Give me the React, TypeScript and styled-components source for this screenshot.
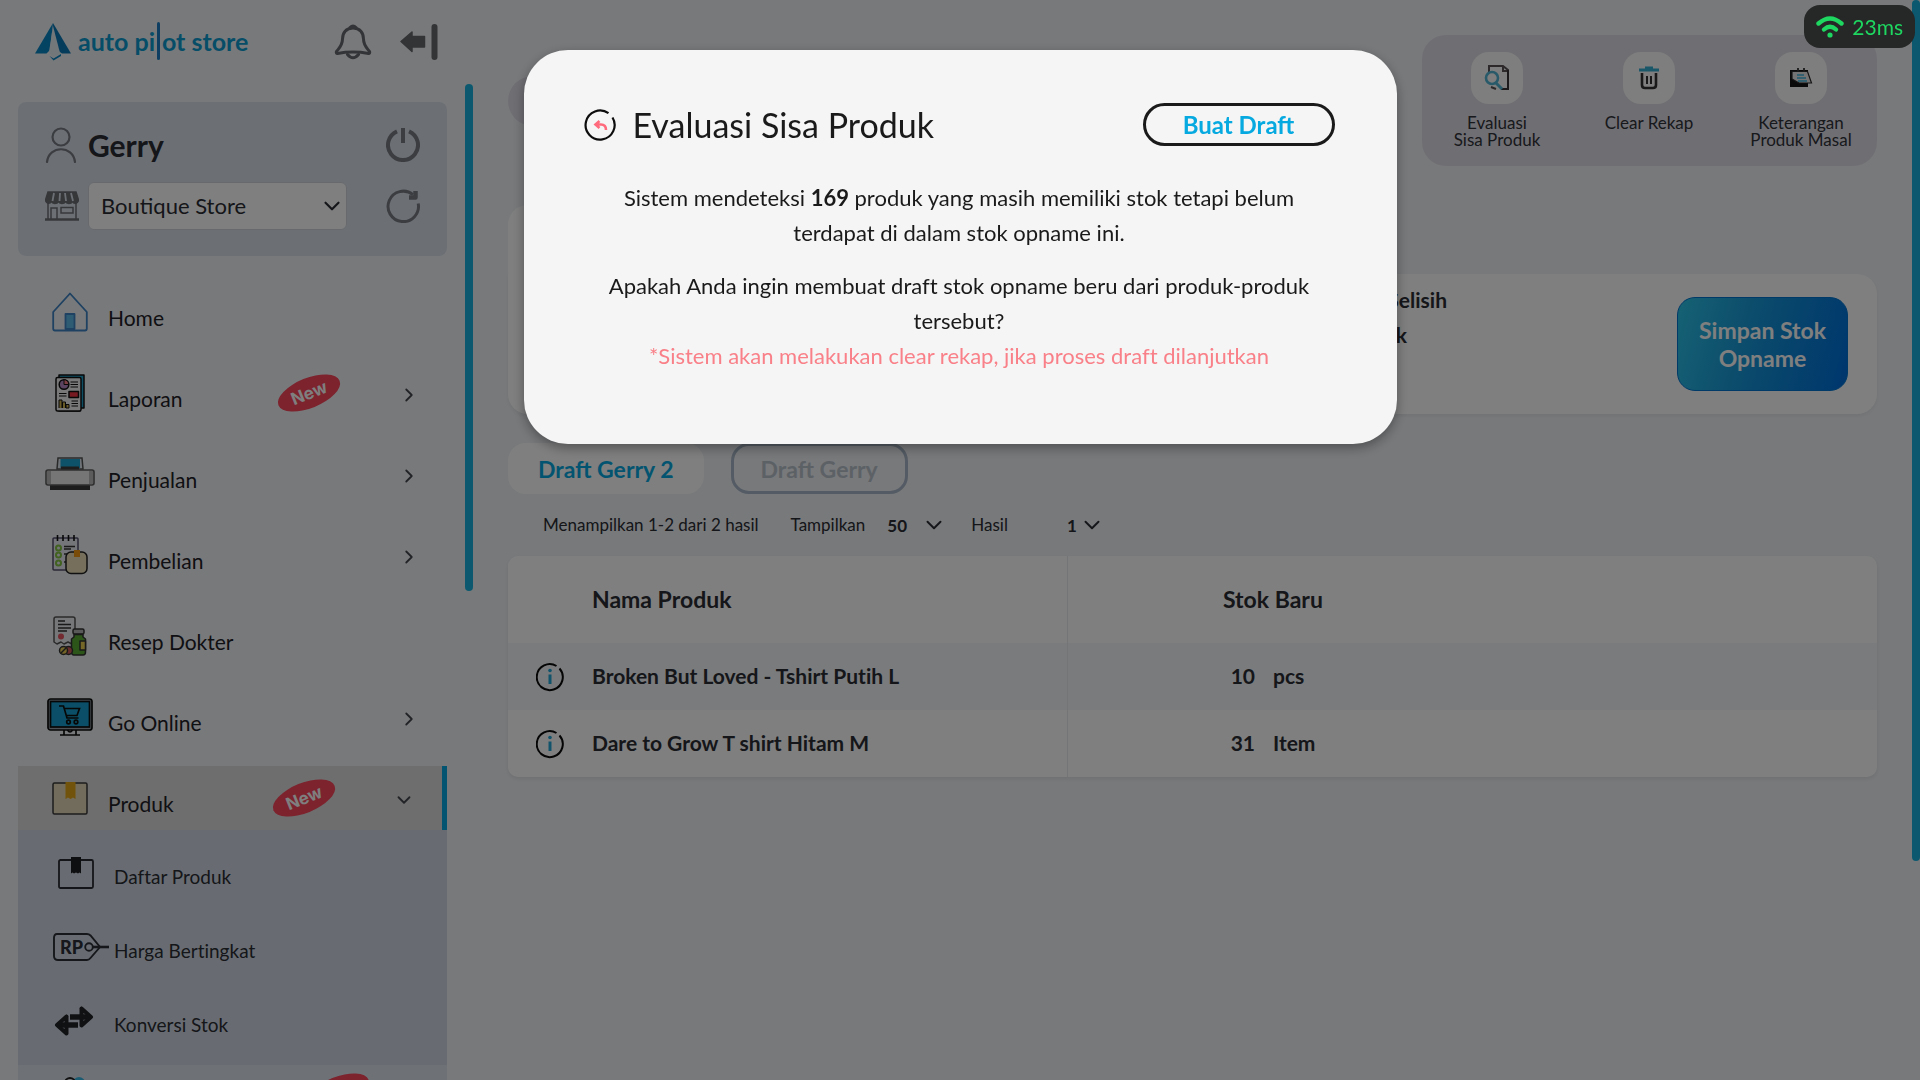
import React from "react";
import styled, { createGlobalStyle } from "styled-components";
import { ChevronDown, ChevronRight } from "lucide-react";

const font = `Lato, "Open Sans", "Liberation Sans", sans-serif`;
const ink = "#2b2d33";
const brand = "#06a9e0";

const GlobalStyle = createGlobalStyle`
  *, *::before, *::after { box-sizing: border-box; }
  body {
    margin: 0;
    background: #f0f3f6;
    color: ${ink};
    font-family: ${font};
    font-variant-ligatures: none;
    overflow: hidden;
  }
  button, select { font-family: inherit; color: inherit; }
  h1, p, ul { margin: 0; padding: 0; }
  ul { list-style: none; }
  svg { display: block; flex: none; }
`;

/* ---------- page frame ---------- */

const Page = styled.div`
  display: flex;
  height: 100vh;
  overflow: hidden;
`;

const Sidebar = styled.aside`
  flex: none;
  width: 508px;
  display: flex;
  flex-direction: column;
`;

const Main = styled.main`
  flex: 1;
  min-width: 0;
  padding: 35px 35px 0 0;
`;

const ScrollTrack = styled.div`
  flex: none;
  width: 8px;
`;

const ScrollThumb = styled.div<{ $size: string }>`
  height: ${(p) => p.$size};
  border-radius: 4px;
  background: #17b1de;
`;

/* ---------- sidebar ---------- */

const SideHeader = styled.header`
  display: flex;
  align-items: center;
  height: 84px;
  padding: 0 70px 0 35px;
`;

const Logo = styled.a`
  display: flex;
  align-items: center;
  gap: 7px;
  margin-right: auto;
  color: #0d9ad0;
  text-decoration: none;
`;

const LogoText = styled.span`
  display: flex;
  align-items: center;
  padding-bottom: 2px;
  font-size: 25px;
  line-height: 36px;
  font-weight: 700;
`;

const LogoBar = styled.span`
  width: 3px;
  height: 38px;
  margin: 0 2px;
  border-radius: 2px;
  background: #1c7fc4;
`;

const IconButton = styled.button`
  display: flex;
  padding: 0;
  border: 0;
  background: none;
  color: #66696e;
  cursor: pointer;
`;

const HeaderActions = styled.div`
  display: flex;
  align-items: center;
  gap: 28px;
`;

const SideBody = styled.div`
  flex: 1;
  min-height: 0;
  display: flex;
  gap: 18px;
  padding-left: 18px;
`;

const SideContent = styled.div`
  flex: none;
  width: 429px;
  padding-top: 18px;
  overflow: hidden;
`;

const UserCard = styled.section`
  display: grid;
  grid-template-columns: 34px 258px 1fr;
  column-gap: 9px;
  row-gap: 6px;
  align-items: center;
  height: 154px;
  padding: 18px 27px 20px 27px;
  border-radius: 8px;
  background: #d9e0eb;

  & > button { justify-self: end; }
`;

const UserName = styled.strong`
  font-size: 30px;
  line-height: 34px;
`;

const SelectWrap = styled.span<{ $width: string }>`
  display: grid;
  width: ${(p) => p.$width};
  align-items: center;

  & > * { grid-area: 1 / 1; }
  & > svg { justify-self: end; margin-right: 2px; pointer-events: none; }
`;

const StoreSelect = styled.select`
  appearance: none;
  height: 48px;
  padding: 0 36px 0 12px;
  border: 1px solid #cfd3da;
  border-radius: 6px;
  background: #fff;
  font-size: 22px;
`;

const Menu = styled.ul`
  display: flex;
  flex-direction: column;
  gap: 17px;
  padding-top: 24px;
`;

const MenuLink = styled.a<{ $active?: boolean }>`
  display: grid;
  grid-template-columns: 50px 1fr 66px 16px;
  align-items: center;
  height: 64px;
  padding: 0 33px 0 27px;
  color: #1f2126;
  text-decoration: none;
  ${(p) =>
    p.$active &&
    `border-right: 5px solid ${brand}; background: #dcdcdc;`}

  & > :first-child { justify-self: center; }
`;

const MenuLabel = styled.span`
  padding: 12px 0 0 13px;
  font-size: 21px;
  line-height: 28px;
`;

const BadgeSlot = styled.span`
  grid-column: 3;
  width: 122px;
  justify-self: end;
`;

const NewBadge = styled.span`
  display: block;
  width: 66px;
  border-radius: 50%;
  background: #f8465c;
  color: #fff;
  font: 700 17px/30px Inter, sans-serif;
  text-align: center;
  transform: rotate(-22deg);
`;

const ChevronSlot = styled.span`
  grid-column: 4;
  padding-top: 4px;
`;

const SubMenu = styled.ul`
  padding: 10px 0 3px;
  background: #d1d9e5;
`;

const SubLink = styled.a`
  display: flex;
  align-items: center;
  height: 74px;
  padding-left: 35px;
  color: ${ink};
  text-decoration: none;
  font-size: 19px;
  line-height: 28px;
`;

const SubIcon = styled.span`
  width: 61px;
  padding-bottom: 8px;
`;

const NextLink = styled(MenuLink)`
  height: 88px;
  align-items: start;
  padding: 12px 4px 0 27px;
  background: #dde3ec;
`;

/* ---------- top actions ---------- */

const TopBar = styled.div`
  display: flex;
  justify-content: space-between;
  align-items: center;
  height: 131px;
`;

const BackPill = styled.button`
  width: 120px;
  height: 50px;
  border: 0;
  border-radius: 25px;
  background: #dfdde6;
`;

const ActionPanel = styled.div`
  display: flex;
  justify-content: space-between;
  align-self: stretch;
  width: 455px;
  padding: 17px 11px 0 10px;
  border-radius: 24px;
  background: #dfdde6;
`;

const ActionButton = styled.button`
  display: flex;
  flex-direction: column;
  align-items: center;
  gap: 10px;
  width: 130px;
  padding: 0;
  border: 0;
  background: none;
  color: #303238;
  font-size: 17px;
  line-height: 17px;
  white-space: pre-line;
`;

const ActionTile = styled.span`
  display: grid;
  place-items: center;
  width: 52px;
  height: 52px;
  border-radius: 18px;
  background: #fdfdfd;
`;

/* ---------- summary ---------- */

const SummaryTab = styled.div`
  width: 400px;
  height: 69px;
  margin-top: 39px;
  border-radius: 20px 20px 0 0;
  background: #fff;
`;

const Summary = styled.section`
  display: flex;
  justify-content: flex-end;
  align-items: center;
  gap: 230px;
  height: 140px;
  padding-right: 29px;
  border-radius: 0 20px 20px 20px;
  background: #fff;
  box-shadow: 0 2px 4px rgba(0, 0, 0, 0.06);
`;

const SummaryInfo = styled.p`
  align-self: flex-start;
  padding-top: 8px;
  font-size: 21px;
  line-height: 35px;
  font-weight: 700;
`;

const SaveButton = styled.button`
  width: 171px;
  height: 94px;
  padding: 0 16px;
  border: 1px solid #0074d0;
  border-radius: 18px;
  background: linear-gradient(105deg, #2cc4e8 0%, #1899d8 40%, #0071da 95%);
  color: #fff;
  font-size: 23px;
  line-height: 28px;
  font-weight: 700;
`;

/* ---------- drafts and table ---------- */

const Tabs = styled.div`
  display: flex;
  gap: 27px;
  margin-top: 29px;
`;

const Tab = styled.button<{ $selected?: boolean }>`
  height: 51px;
  padding: 0 27px;
  border: 3px solid ${(p) => (p.$selected ? "#fff" : "#a9b7c8")};
  border-radius: 18px;
  background: ${(p) => (p.$selected ? "#fff" : "transparent")};
  color: ${(p) => (p.$selected ? brand : "#b9c2cd")};
  font-size: 23px;
  font-weight: 700;
`;

const Pager = styled.div`
  display: flex;
  align-items: center;
  height: 62px;
  padding-left: 35px;
  font-size: 17px;
  line-height: 24px;

  & > label { display: flex; align-items: center; gap: 22px; }
`;

const PagerGap = styled.span<{ $size: string }>`
  width: ${(p) => p.$size};
`;

const PagerSelect = styled.select`
  appearance: none;
  height: 28px;
  padding: 0;
  border: 0;
  background: none;
  font-size: 17px;
  font-weight: 700;
`;

const Table = styled.table`
  width: 100%;
  table-layout: fixed;
  border-spacing: 0;
  border-radius: 10px;
  background: #fff;
  box-shadow: 0 2px 4px rgba(0, 0, 0, 0.08);
  overflow: hidden;
  font-size: 21px;
  font-weight: 700;

  th, td { padding: 0 0 2px; text-align: left; }
  th { height: 87px; font-size: 23px; }
  td { height: 67px; }
  tbody tr:nth-child(odd) { background: #f3f6fa; }
  th:nth-child(2), td:nth-child(2) { border-right: 1px solid #e6eaef; }
`;

const InfoCell = styled.div`
  display: flex;
  justify-content: center;
`;

const StockHead = styled.div`
  padding-left: 155px;
`;

const Stock = styled.div`
  display: grid;
  grid-template-columns: 187px 1fr;
  column-gap: 18px;

  & > :first-child { text-align: right; }
`;

/* ---------- overlay ---------- */

const Backdrop = styled.div`
  position: fixed;
  inset: 0;
  display: flex;
  justify-content: center;
  align-items: flex-start;
  padding-top: 50px;
  background: rgba(0, 0, 0, 0.5);
`;

const Dialog = styled.div`
  width: 873px;
  padding: 53px 62px 71px 60px;
  border-radius: 44px;
  background: #f5f5f5;
  box-shadow: 0 4px 12px rgba(0, 0, 0, 0.35);
  color: #1a1a1a;
`;

const DialogHead = styled.div`
  display: flex;
  align-items: center;
  gap: 17px;
  margin-bottom: 34px;

  & > h1 {
    flex: 1;
    font-size: 34px;
    line-height: 43px;
    font-weight: 400;
  }
`;

const DraftButton = styled.button`
  width: 192px;
  height: 43px;
  padding: 0;
  border: 3px solid #1a1a1a;
  border-radius: 22px;
  background: none;
  color: ${brand};
  font-size: 24px;
  font-weight: 700;
`;

const DialogText = styled.p`
  margin-top: 18px;
  padding: 0 12px;
  font-size: 22px;
  line-height: 35px;
  text-align: center;
`;

const Warning = styled.span`
  display: block;
  color: #f98088;
`;

const Ping = styled.div`
  position: fixed;
  top: 5px;
  right: 5px;
  display: flex;
  align-items: center;
  gap: 8px;
  height: 43px;
  padding: 0 12px;
  border-radius: 16px;
  background: #262727;
  color: #1ed760;
  font-size: 21px;
`;

/* ---------- drawings ---------- */

const LogoMark = () => (
  <svg width="36" height="38" viewBox="0 0 36 38">
    <path d="M18 0L0 30.500H11.500L15 27Z" fill="#0b86c4" />
    <path d="M18 0L36 30.500H27L20 25.500L17.500 8Z" fill="#0b79b8" />
    <path d="M18 3L14 29L18.500 35L25 30Z" fill="#e4eef5" />
    <path d="M14.500 33L18.500 35.500L26 31V33L18.500 37.500Z" fill="#0b86c4" />
  </svg>
);

const BellIcon = () => (
  <svg width="38" height="36" viewBox="0 0 38 36" fill="none" stroke="currentColor" strokeWidth="3" strokeLinejoin="round" strokeLinecap="round">
    <path d="M19 4C12 4 8.500 9 8.500 15C8.500 21 6 23 2.500 27.500C2 28.500 2.300 29.500 3.500 29.500C13 27.800 25 27.800 34.500 29.500C35.700 29.500 36 28.500 35.500 27.500C32 23 29.500 21 29.500 15C29.500 9 26 4 19 4Z" />
    <path d="M16 3.500Q19 0.500 22 3.500M13.500 30.500Q19 37 24.500 30.500" />
  </svg>
);

const CollapseIcon = () => (
  <svg width="38" height="38" viewBox="0 0 38 38" fill="#66686b">
    <path d="M1 18.500L12 9V13.500H24.500V24H12V28.500Z" stroke="#66686b" strokeWidth="1.500" strokeLinejoin="round" />
    <rect x="31.500" y="1" width="6" height="36" rx="3" />
  </svg>
);

const PersonIcon = () => (
  <svg width="32" height="36" viewBox="0 0 32 36" fill="none" stroke="#767a82" strokeWidth="2.200">
    <circle cx="16" cy="10" r="8.500" />
    <path d="M2 35C4 18 28 18 30 35" strokeLinecap="round" />
  </svg>
);

const StoreIcon = () => (
  <svg width="34" height="30" viewBox="0 0 34 30" fill="none" stroke="#6b6e73" strokeWidth="1.500">
    <path d="M3 1H31L33.500 9C33 13 28.500 13 27.500 10.500C26 13 21.500 13 20.500 10.500C19 13 14.500 13 13.500 10.500C12 13 7.500 13 6.500 10.500C5 13 1 13 .500 9Z" fill="#6b6e73" />
    <path d="M9 2L7.500 10M15 2L14.500 10M20 2L21 10M26 2L28 10" stroke="#d9e0eb" strokeWidth="1.800" />
    <path d="M3 12V28M31 12V28M6 28V17H12V28M16 16.500H28V22H16Z" />
    <path d="M0 28.500H34" strokeWidth="2.400" />
  </svg>
);

const PowerIcon = () => (
  <svg width="34" height="34" viewBox="0 0 34 34" fill="none" stroke="#777b82" strokeWidth="4">
    <path d="M11 3.300A15 15 0 1 0 23 3.300" />
    <path d="M17 0V15" />
  </svg>
);

const RefreshIcon = () => (
  <svg width="34" height="34" viewBox="0 0 34 34" fill="none" stroke="#777b82" strokeWidth="3">
    <path d="M27 5.700A15.200 15.200 0 1 0 32.200 14.500" />
    <path d="M29.500 2V8.500H23" strokeWidth="4.500" strokeLinejoin="round" />
  </svg>
);

const HomeIcon = () => (
  <svg width="36" height="40" viewBox="0 0 36 40" fill="none" stroke="#3e82c4" strokeWidth="1.800" strokeLinejoin="round">
    <path d="M18 1.500L1.200 20V36.500Q1.200 38.500 3 38.500H33Q34.800 38.500 34.800 36.500V20Z" />
    <rect x="13.500" y="22" width="9" height="15" fill="#5cb9e6" />
  </svg>
);

const ReportIcon = () => (
  <svg width="30" height="38" viewBox="0 0 30 38" stroke="#111" strokeWidth="1.500" strokeLinejoin="round">
    <path d="M4 1H29V34H25V37H4Z" fill="#1c9fc8" />
    <rect x="1" y="3.500" width="25" height="33.500" rx="1.500" fill="#f2f2f2" />
    <circle cx="9" cy="10.500" r="4.800" fill="#b588c4" />
    <path d="M9 5.700V10.500H13.800A4.800 4.800 0 0 0 9 5.700Z" fill="#f47c86" strokeWidth="1" />
    <path d="M15.500 8H23M15.500 10.500H23M15.500 13H23M4 19.500H11.500M4 22H11.500M16.500 27H23M16.500 29.500H23M16.500 32H23" strokeWidth="1.200" />
    <rect x="14" y="17.500" width="9.500" height="6" fill="#ec3342" />
    <path d="M4 34V26H7V34M7.500 34V28H10.500V34M11 34V30.500H14V34Z" fill="#d2b64e" strokeWidth="1" />
  </svg>
);

const PrinterIcon = () => (
  <svg width="50" height="34" viewBox="0 0 50 34">
    <path d="M13 1H37L38 12H12Z" fill="#dce6ee" stroke="#555" strokeWidth="1.500" />
    <path d="M15.500 2H35V11H15.500Z" fill="#1aa5d1" />
    <rect x="16" y="9.500" width="18" height="4" fill="#3d3d3d" />
    <rect x="5" y="26" width="40" height="7" fill="#3a3a3a" />
    <rect x="1" y="13" width="48" height="15" rx="2" fill="#ededed" stroke="#5d5d5d" strokeWidth="1.600" />
    <path d="M2 14H6V27H2ZM44 14H48V27H44Z" fill="#b8b8b8" />
  </svg>
);

const PurchaseIcon = () => (
  <svg width="36" height="40" viewBox="0 0 36 40" fill="none" stroke="#333" strokeWidth="1.500" strokeLinejoin="round">
    <path d="M1 4Q1 3 2 3H25Q26 3 26 4V35H2Q1 35 1 34Z" fill="#e9eaf2" stroke="#55506e" />
    <path d="M5.500 0V6M11 0V6M16.500 0V6M22 0V6" strokeWidth="1.600" stroke="#111" />
    <g stroke="#83c441" strokeWidth="2"><circle cx="6.500" cy="13" r="2.500" /><circle cx="6.500" cy="20" r="2.500" /><circle cx="6.500" cy="28" r="2.500" /></g>
    <path d="M12 11.500H23M12 14H19M12 19H16M12 27H14" />
    <rect x="14" y="17" width="21" height="21.500" rx="5" fill="#eadfb8" stroke="#222" />
    <path d="M22 15H28V22H22Z" fill="#f39b12" stroke="none" />
  </svg>
);

const RecipeIcon = () => (
  <svg width="34" height="40" viewBox="0 0 34 40" stroke="#333" strokeWidth="1.500" strokeLinejoin="round">
    <path d="M1 3Q1 1 3 1H20Q22 1 22 3V26L19 28L15 26L11 28L8 26L4 28L1 26Z" fill="#eceef2" stroke="#555" />
    <path d="M5 5H12M5 8.500H18M5 12H18M5 15H14" />
    <circle cx="8" cy="20.500" r="3" fill="#e65560" stroke="none" />
    <rect x="20" y="13" width="11" height="5" rx="1.500" fill="#b3b3b3" />
    <path d="M21 18.500H30V21L32.500 23V36Q32.500 39 30 39H21Q18.500 39 18.500 36V23L21 21Z" fill="#57ab33" />
    <path d="M27 25H32.500V34H27Z" fill="#e9cf50" />
    <circle cx="15.500" cy="34.500" r="4" fill="#ce5b5b" />
    <circle cx="10.500" cy="34.500" r="4" fill="#e7c94e" />
    <path d="M8 37L13 32" />
  </svg>
);

const OnlineIcon = () => (
  <svg width="46" height="38" viewBox="0 0 46 38" fill="none" stroke="#0d0d0d" strokeWidth="1.700">
    <rect x="1" y="1" width="44" height="31" rx="2.500" fill="#9aa3aa" />
    <rect x="3.500" y="3.500" width="39" height="25.500" fill="#159fce" />
    <path d="M12 8H16.500L20 20H31.500M18 10.500H32.500L30 17.500H20" />
    <circle cx="21.500" cy="24" r="1.800" /><circle cx="29" cy="24" r="1.800" />
    <path d="M17 32V37M29 32V37M13 37H33M20.500 32Q23 36 25.500 32" />
  </svg>
);

const BoxIcon = () => (
  <svg width="36" height="34" viewBox="0 0 36 34">
    <rect x="1" y="2" width="34" height="31" rx="1.500" fill="#e2d8b6" stroke="#3a3a3a" strokeWidth="1.500" />
    <path d="M13.500 1H23.500V18L21 16.500L18.500 18L16 16.500L13.500 18Z" fill="#e5a716" />
  </svg>
);

const OutlineBoxIcon = () => (
  <svg width="41" height="32" viewBox="-5 0 41 32">
    <rect x="1" y="3" width="34" height="28" rx="1.500" fill="none" stroke="#262a31" strokeWidth="1.800" />
    <path d="M13 0H23V16.500L21.500 15.500L20 16.500L18 15.500L16 16.500L14.500 15.500L13 16.500Z" fill="#1d1e20" />
  </svg>
);

const PriceIcon = () => (
  <svg width="56" height="28" viewBox="0 0 56 28" fill="none" stroke="#2a2e36" strokeWidth="1.900">
    <path d="M4 1H34Q36 1 37.500 2.500L47 14L37.500 25Q36 27 34 27H5Q1 27 1 23V5Q1 1 4 1Z" />
    <circle cx="36" cy="14" r="3.800" />
    <path d="M40 14H56" strokeWidth="2.600" />
    <text x="7" y="20.500" fill="#2a2e36" stroke="none" fontFamily="Lato, sans-serif" fontWeight="900" fontSize="18">RP</text>
  </svg>
);

const SwapIcon = () => (
  <svg width="42" height="32" viewBox="0 0 42 32" fill="none" stroke="#202226" strokeWidth="5.500" strokeLinejoin="round">
    <path d="M17 12H36" />
    <path d="M28.500 3.500L38 12L28.500 20.500V3.500" strokeLinecap="round" strokeWidth="4" />
    <path d="M25 20H6" />
    <path d="M13.500 11.500L4 20L13.500 28.500V11.500" strokeLinecap="round" strokeWidth="4" />
    <path d="M17 16.300H25" stroke="#d1d9e5" strokeWidth="1.300" />
  </svg>
);

const PeopleIcon = () => (
  <svg width="40" height="40" viewBox="0 0 40 40" fill="none" strokeWidth="2">
    <circle cx="29" cy="6" r="5" fill="#38b8e4" stroke="#38b8e4" />
    <circle cx="20" cy="6" r="5" fill="#e5e9ee" stroke="#222" />
    <path d="M9 30C9 8 31 8 31 30Z" fill="#e5e9ee" stroke="#222" />
  </svg>
);

const EvaluateIcon = () => (
  <svg width="28" height="28" viewBox="0 0 28 28" fill="none" strokeWidth="2">
    <path d="M6 8V2H20L25 6V25H18M20 2V7H25M8 23L13 25" stroke="#5a5356" />
    <path d="M25 6V25H18" stroke="#3a3538" />
    <circle cx="9" cy="14" r="6" stroke="#52b4d2" strokeWidth="2.600" />
    <path d="M13 19L19 25" stroke="#52b4d2" strokeWidth="3" />
  </svg>
);

const TrashIcon = () => (
  <svg width="20" height="24" viewBox="0 0 20 24" fill="none" strokeWidth="2.600">
    <path d="M0 4H20M6 2H14" stroke="#35aed3" strokeWidth="3" />
    <path d="M3 7V19Q3 22 6 22H14Q17 22 17 19V7" stroke="#333" />
    <path d="M8 10V18M12 10V18" stroke="#333" strokeWidth="2" />
  </svg>
);

const NotesIcon = () => (
  <svg width="24" height="22" viewBox="0 0 24 22">
    <path d="M1 3H19V20H1Z" fill="#151515" />
    <path d="M3 4.500H18.500L22.500 16H10L3 12Z" fill="#e8e8e8" stroke="#2a2a2a" strokeWidth="1.200" />
    <path d="M8 8H15M8 11H17M9 14H18" stroke="#3fb4da" strokeWidth="1.600" />
    <path d="M9 1V5M15 1V5" stroke="#333" strokeWidth="1.800" />
  </svg>
);

const InfoIcon = () => (
  <svg width="28" height="34" viewBox="0 0 28 34" fill="none">
    <path d="M23.500 8.500A13 13 0 1 1 20.500 6" transform="translate(0 1)" stroke="#0b0b0b" strokeWidth="2" />
    <path d="M14 15.500V25" stroke="#22a7d6" strokeWidth="3" />
    <circle cx="14" cy="11.500" r="1.800" fill="#22a7d6" />
  </svg>
);

const BackIcon = () => (
  <svg width="32" height="32" viewBox="0 0 32 32" fill="none">
    <path d="M28.500 8.500A14.500 14.500 0 1 1 24.500 4.200" stroke="#0d0d0d" strokeWidth="2.200" />
    <path d="M15.500 12L11.500 15.500L15.500 19M12 15.500H17Q22 15.500 22 21" stroke="#ff6b7c" strokeWidth="2.600" />
  </svg>
);

const WifiIcon = () => (
  <svg width="28" height="22" viewBox="0 0 28 22" fill="none" stroke="#1ed760" strokeWidth="4.400" strokeLinecap="round">
    <path d="M2.500 7.500Q14 -2.500 25.500 7.500" />
    <path d="M8 13.500Q14 8 20 13.500" />
    <circle cx="14" cy="19" r="2.600" fill="#1ed760" stroke="none" />
  </svg>
);

/* ---------- data ---------- */

type Item = { label: string; icon: React.ReactNode; isNew?: boolean; more?: boolean };

const menu: Item[] = [
  { label: "Home", icon: <HomeIcon /> },
  { label: "Laporan", icon: <ReportIcon />, isNew: true, more: true },
  { label: "Penjualan", icon: <PrinterIcon />, more: true },
  { label: "Pembelian", icon: <PurchaseIcon />, more: true },
  { label: "Resep Dokter", icon: <RecipeIcon /> },
  { label: "Go Online", icon: <OnlineIcon />, more: true },
];

const subMenu: Item[] = [
  { label: "Daftar Produk", icon: <OutlineBoxIcon /> },
  { label: "Harga Bertingkat", icon: <PriceIcon /> },
  { label: "Konversi Stok", icon: <SwapIcon /> },
];

const actions = [
  { label: "Evaluasi\nSisa Produk", icon: <EvaluateIcon /> },
  { label: "Clear Rekap", icon: <TrashIcon /> },
  { label: "Keterangan\nProduk Masal", icon: <NotesIcon /> },
];

const products = [
  { name: "Broken But Loved - Tshirt Putih L", qty: 10, unit: "pcs" },
  { name: "Dare to Grow T shirt Hitam M", qty: 31, unit: "Item" },
];

const Badge = () => (
  <BadgeSlot>
    <NewBadge>New</NewBadge>
  </BadgeSlot>
);

export default function App() {
  return (
    <>
      <GlobalStyle />
      <Page>
        <Sidebar>
          <SideHeader>
            <Logo href="#" aria-label="auto pilot store">
              <LogoMark />
              <LogoText>
                auto pi
                <LogoBar />
                ot store
              </LogoText>
            </Logo>
            <HeaderActions>
              <IconButton aria-label="Notifikasi"><BellIcon /></IconButton>
              <IconButton aria-label="Tutup menu"><CollapseIcon /></IconButton>
            </HeaderActions>
          </SideHeader>
          <SideBody>
            <SideContent>
              <UserCard>
                <PersonIcon />
                <UserName>Gerry</UserName>
                <IconButton aria-label="Keluar"><PowerIcon /></IconButton>
                <StoreIcon />
                <SelectWrap $width="259px">
                  <StoreSelect aria-label="Toko" defaultValue="b">
                    <option value="b">Boutique Store</option>
                  </StoreSelect>
                  <ChevronDown size={26} />
                </SelectWrap>
                <IconButton aria-label="Muat ulang"><RefreshIcon /></IconButton>
              </UserCard>
              <nav>
                <Menu>
                  {menu.map((m) => (
                    <li key={m.label}>
                      <MenuLink href="#">
                        {m.icon}
                        <MenuLabel>{m.label}</MenuLabel>
                        {m.isNew && <Badge />}
                        {m.more && <ChevronSlot><ChevronRight size={22} color="#44474d" /></ChevronSlot>}
                      </MenuLink>
                    </li>
                  ))}
                  <li>
                    <MenuLink href="#" $active>
                      <BoxIcon />
                      <MenuLabel>Produk</MenuLabel>
                      <Badge />
                      <ChevronSlot><ChevronDown size={22} color="#44474d" /></ChevronSlot>
                    </MenuLink>
                    <SubMenu>
                      {subMenu.map((s) => (
                        <li key={s.label}>
                          <SubLink href="#">
                            <SubIcon>{s.icon}</SubIcon>
                            {s.label}
                          </SubLink>
                        </li>
                      ))}
                    </SubMenu>
                    <NextLink href="#" aria-label="Pelanggan">
                      <PeopleIcon />
                      <Badge />
                    </NextLink>
                  </li>
                </Menu>
              </nav>
            </SideContent>
            <ScrollTrack><ScrollThumb $size="507px" /></ScrollTrack>
          </SideBody>
        </Sidebar>

        <Main>
          <TopBar>
            <BackPill aria-label="Kembali" />
            <ActionPanel>
              {actions.map((a) => (
                <ActionButton key={a.label}>
                  <ActionTile>{a.icon}</ActionTile>
                  {a.label}
                </ActionButton>
              ))}
            </ActionPanel>
          </TopBar>

          <SummaryTab />
          <Summary>
            <SummaryInfo>
              Nilai Selisih
              <br />
              Produk
            </SummaryInfo>
            <SaveButton>Simpan Stok Opname</SaveButton>
          </Summary>

          <Tabs>
            <Tab $selected>Draft Gerry 2</Tab>
            <Tab>Draft Gerry</Tab>
          </Tabs>

          <Pager>
            Menampilkan 1-2 dari 2 hasil
            <PagerGap $size="32px" />
            <label>
              Tampilkan
              <SelectWrap $width="62px">
                <PagerSelect defaultValue="50"><option>50</option></PagerSelect>
                <ChevronDown size={26} strokeWidth={1.8} />
              </SelectWrap>
              Hasil
            </label>
            <PagerGap $size="59px" />
            <SelectWrap $width="40px">
              <PagerSelect aria-label="Halaman" defaultValue="1"><option>1</option></PagerSelect>
              <ChevronDown size={26} strokeWidth={1.8} />
            </SelectWrap>
          </Pager>

          <Table>
            <colgroup>
              <col width="84" />
              <col width="476" />
              <col />
            </colgroup>
            <thead>
              <tr>
                <th aria-label="Info" />
                <th>Nama Produk</th>
                <th><StockHead>Stok Baru</StockHead></th>
              </tr>
            </thead>
            <tbody>
              {products.map((p) => (
                <tr key={p.name}>
                  <td><InfoCell><InfoIcon /></InfoCell></td>
                  <td>{p.name}</td>
                  <td>
                    <Stock>
                      <span>{p.qty}</span>
                      <span>{p.unit}</span>
                    </Stock>
                  </td>
                </tr>
              ))}
            </tbody>
          </Table>
        </Main>
        <ScrollTrack><ScrollThumb $size="861px" /></ScrollTrack>
      </Page>

      <Backdrop>
        <Dialog role="dialog" aria-modal="true" aria-labelledby="dialog-title">
          <DialogHead>
            <IconButton aria-label="Kembali"><BackIcon /></IconButton>
            <h1 id="dialog-title">Evaluasi Sisa Produk</h1>
            <DraftButton>Buat Draft</DraftButton>
          </DialogHead>
          <DialogText>
            Sistem mendeteksi <strong>169</strong> produk yang masih memiliki stok tetapi belum
            terdapat di dalam stok opname ini.
          </DialogText>
          <DialogText>
            Apakah Anda ingin membuat draft stok opname beru dari produk-produk tersebut?
            <Warning>*Sistem akan melakukan clear rekap, jika proses draft dilanjutkan</Warning>
          </DialogText>
        </Dialog>
      </Backdrop>
      <Ping>
        <WifiIcon />
        23ms
      </Ping>
    </>
  );
}
